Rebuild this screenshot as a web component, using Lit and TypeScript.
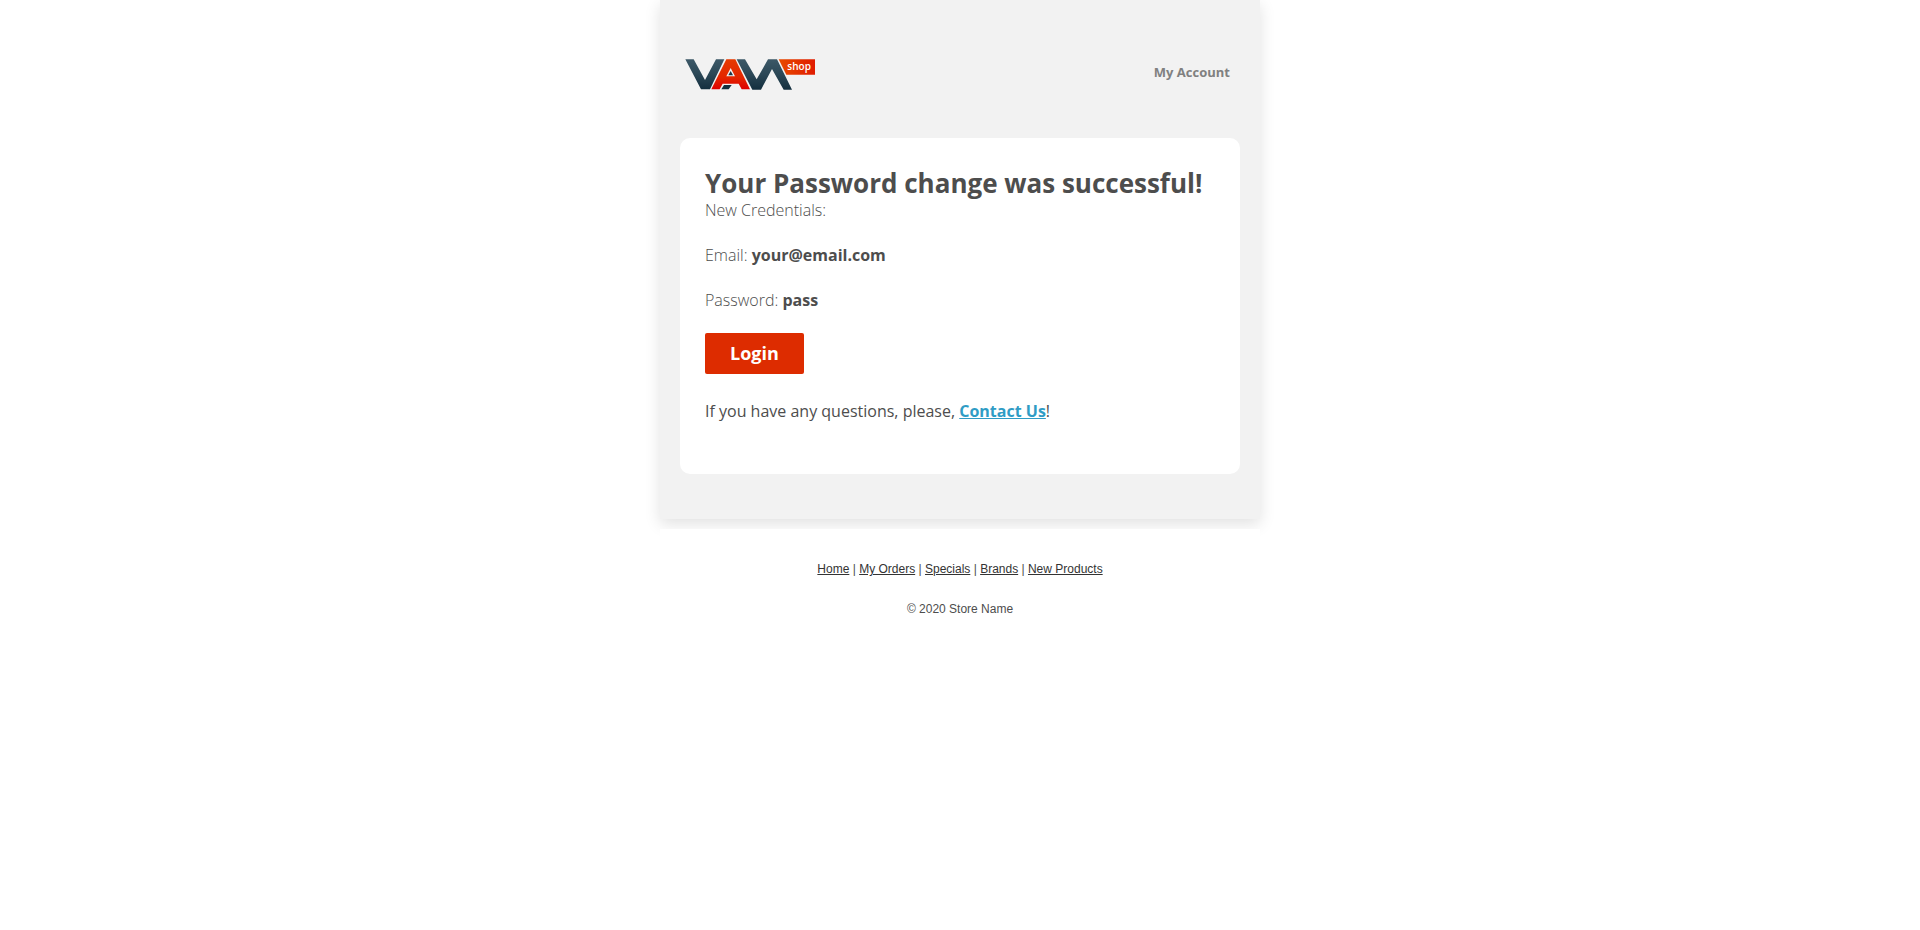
import { LitElement, html, css } from "lit";
import { customElement } from "lit/decorators.js";

const FOOTER_LINKS = ["Home", "My Orders", "Specials", "Brands", "New Products"];

@customElement("shop-logo")
export class ShopLogo extends LitElement {
  static styles = css`
    :host {
      display: block;
    }
    .logo {
      display: block;
      width: 140px;
      height: 50px;
    }
    .tag {
      font: 600 30px "Open Sans", sans-serif;
      fill: #fff;
    }
  `;

  render() {
    return html`
      <svg class="logo" viewBox="15 0 420 150" role="img" aria-label="VamShop">
        <defs>
          <linearGradient id="steel" x1="0" y1="0" x2="0" y2="1">
            <stop offset="0" stop-color="#3c5867" />
            <stop offset="0.5" stop-color="#2b4756" />
            <stop offset="1" stop-color="#142f3f" />
          </linearGradient>
          <linearGradient id="flame" x1="0" y1="0" x2="0" y2="1">
            <stop offset="0" stop-color="#e63a00" />
            <stop offset="0.6" stop-color="#e42600" />
            <stop offset="1" stop-color="#dd0000" />
          </linearGradient>
          <linearGradient id="ribbon" x1="0" y1="0" x2="1" y2="0">
            <stop offset="0" stop-color="#e84a00" />
            <stop offset="1" stop-color="#e01c00" />
          </linearGradient>
        </defs>
        <polygon fill="url(#steel)" points="31,28 56,28 90,90 123,28 148,28 105,118 78,118" />
        <polygon fill="url(#steel)" points="185,28 210,28 245,88 279,28 306,28 351,119 326,119 291,57 258,119 232,119" />
        <path
          fill="url(#flame)"
          fill-rule="evenodd"
          d="M154 28H181L225 118H200L191 101H143L134 118H109ZM167 54L154 79H180Z"
        />
        <polygon fill="#1d3747" points="167,63 160,76 174,76" />
        <polygon fill="#142f3f" points="147,105 170,105 161,118 139,118" />
        <polygon fill="url(#ribbon)" points="311,28 420,28 420,74 334,74" />
        <text class="tag" x="337" y="60">shop</text>
      </svg>
    `;
  }
}

@customElement("app-root")
export class AppRoot extends LitElement {
  static styles = css`
    :host {
      display: block;
      color: #4d4d4d;
      font: 16px/24px "Open Sans", sans-serif;
    }
    .mail {
      max-width: 600px;
      margin: 0 auto;
    }
    .sheet {
      padding: 0 20px 45px;
      background: #f2f2f2;
      box-shadow: 0 5px 15px rgba(0, 0, 0, 0.12);
    }
    .top {
      display: flex;
      justify-content: space-between;
      align-items: center;
      padding: 50px 10px 38px 0;
    }
    .account {
      padding-bottom: 6px;
      color: #808080;
      font-size: 13px;
      font-weight: 700;
      text-decoration: none;
    }
    .card {
      padding: 30px 25px 51px;
      border-radius: 10px;
      background: #fff;
    }
    .title {
      margin: 0;
      font-size: 26px;
      line-height: 30px;
      font-weight: 700;
    }
    .line {
      margin: 0 0 21px;
      font-weight: 300;
    }
    .value {
      font-weight: 700;
    }
    .login {
      display: block;
      margin: 0 0 25px;
      padding: 8px 25px;
      border: 0;
      border-radius: 2px;
      background: #dd2c00;
      color: #fff;
      font: 700 18px/25px "Open Sans", sans-serif;
      cursor: pointer;
    }
    .help {
      margin: 0;
    }
    .contact {
      color: #2f9cc5;
      font-weight: 700;
    }
    .footer {
      position: relative;
      margin-top: 10px;
      padding: 30px 0;
      background: #fff;
      font: 12px/20px Arial, "Liberation Sans", sans-serif;
      text-align: center;
    }
    .links,
    .copy {
      margin: 0 0 20px;
    }
    .footer-link {
      color: #333;
    }
  `;

  render() {
    return html`
      <div class="mail">
        <main class="sheet">
          <header class="top">
            <shop-logo></shop-logo>
            <a class="account" href="#account">My Account</a>
          </header>
          <section class="card">
            <h1 class="title">Your Password change was successful!</h1>
            <p class="line">New Credentials:</p>
            <p class="line">Email: <strong class="value">your@email.com</strong></p>
            <p class="line">Password: <strong class="value">pass</strong></p>
            <button class="login" type="button">Login</button>
            <p class="help">
              If you have any questions, please,
              <a class="contact" href="#contact">Contact Us</a>!
            </p>
          </section>
        </main>
        <footer class="footer">
          <p class="links">
            ${FOOTER_LINKS.map(
              (name, i) => html`${i ? " | " : ""}<a class="footer-link" href="#">${name}</a>`
            )}
          </p>
          <p class="copy">© 2020 Store Name</p>
        </footer>
      </div>
    `;
  }
}
